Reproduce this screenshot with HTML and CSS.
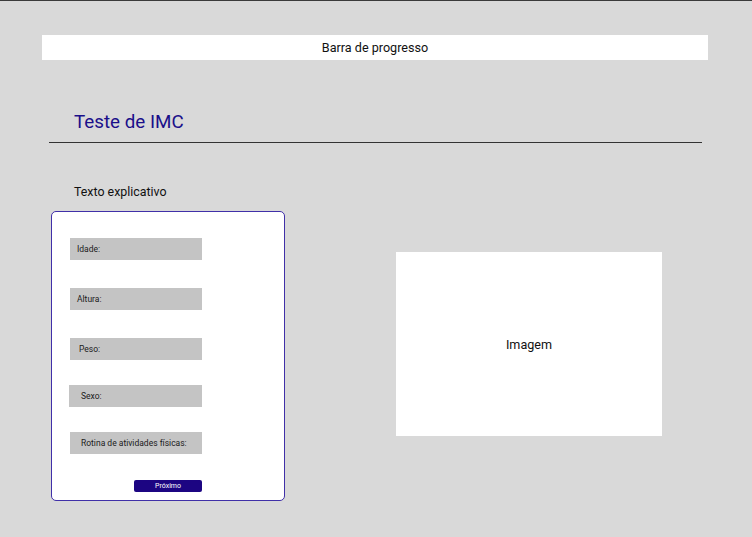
FILE: index.html
```html
<!DOCTYPE html>
<html lang="pt">
<head>
<meta charset="utf-8">
<link rel="stylesheet" href="styles.css">
</head>
<body>
<div class="page">
  <div class="progress">Barra de progresso</div>
  <h1 class="title">Teste de IMC</h1>
  <div class="rule"></div>
  <p class="intro">Texto explicativo</p>
  <div class="main">
    <form class="card">
      <div class="field">Idade:</div>
      <div class="field">Altura:</div>
      <div class="field pad-m">Peso:</div>
      <div class="field tight pad-l wide">Sexo:</div>
      <div class="field tight pad-l">Rotina de atividades físicas:</div>
      <button type="button" class="next">Próximo</button>
    </form>
    <div class="image">Imagem</div>
  </div>
</div>
</body>
</html>
```
FILE: styles.css
```css
* { box-sizing: border-box; }
html, body { margin: 0; padding: 0; }
body {
  background: #d9d9d9;
  font-family: Roboto, "Liberation Sans", sans-serif;
  color: #111;
  width: 752px;
  height: 537px;
  overflow: hidden;
}
.page {
  border-top: 1px solid #3a3a3a;
  height: 100%;
}
.progress {
  margin: 34px 44px 0 42px;
  height: 25px;
  background: #fff;
  display: flex;
  align-items: center;
  justify-content: center;
  font-size: 12.6px;
}
.title {
  margin: 50px 0 0 74px;
  font-size: 18.8px;
  font-weight: 400;
  color: #1b0f8a;
  line-height: 24px;
}
.rule {
  margin: 8px 50px 0 49px;
  border-top: 1px solid #333;
}
.intro {
  margin: 41px 0 0 74px;
  font-size: 12.4px;
  line-height: 16px;
}
.main {
  display: flex;
  align-items: flex-start;
  margin: 11px 0 0 51px;
}
.card {
  width: 234px;
  height: 290px;
  background: #fff;
  border: 1px solid #4030a8;
  border-radius: 5px;
  display: flex;
  flex-direction: column;
  align-items: flex-start;
  padding: 26px 0 0 18px;
}
.field {
  width: 132px;
  height: 22px;
  background: #c4c4c4;
  font-size: 8.5px;
  color: #1a1a1a;
  display: flex;
  align-items: center;
  padding-left: 7px;
}
.field + .field { margin-top: 28px; }
.field.tight { margin-top: 25px; }
.field.pad-m { padding-left: 9px; }
.field.pad-l { padding-left: 11px; }
.field.wide { width: 133px; margin-left: -1px; padding-left: 12px; }
.next {
  margin: 26px 0 0 64px;
  width: 68px;
  height: 12px;
  background: #1c0582;
  color: #fff;
  border: none;
  border-radius: 2px;
  font-family: Roboto, "Liberation Sans", sans-serif;
  font-size: 7px;
  padding: 0;
  line-height: 12px;
}
.image {
  margin: 41px 0 0 111px;
  width: 266px;
  height: 184px;
  background: #fff;
  display: flex;
  align-items: center;
  justify-content: center;
  font-size: 12.6px;
}
```
